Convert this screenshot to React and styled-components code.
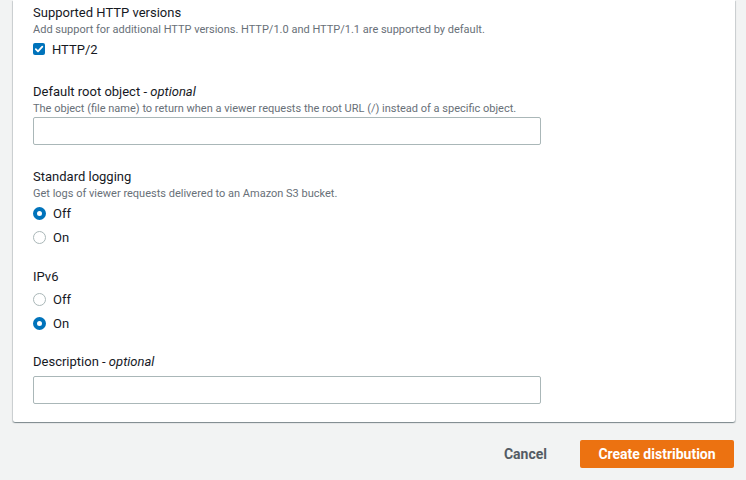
import React from 'react'
import styled, { createGlobalStyle } from 'styled-components'

const GlobalStyle = createGlobalStyle`
    body {
        margin: 0;
        background-color: #f2f3f3;
        font-family: Roboto, "Liberation Sans", Arial, sans-serif;
        color: #16191f;
    }
`;

const Page = styled.div`
    width: 746px;
    height: 480px;
    overflow: hidden;
`;

const Card = styled.div`
    margin: 0 11px 0 13px;
    background-color: #ffffff;
    border-radius: 0 0 2px 2px;
    box-shadow: 0 1px 1px 0 rgba(0, 28, 36, 0.3), 1px 1px 1px 0 rgba(0, 28, 36, 0.15), -1px 1px 1px 0 rgba(0, 28, 36, 0.15);
    padding: 3px 20px 18px;
`;

const Field = styled.div`
    margin-top: ${props => props.$gap || 0}px;
    display: flex;
    flex-direction: column;
`;

const Label = styled.label`
    font-size: 13px;
    line-height: 20px;
`;

const Optional = styled.i`
    font-style: italic;
`;

const Hint = styled.div`
    font-size: 11px;
    line-height: 14px;
    color: #687078;
`;

const Option = styled.label`
    display: flex;
    align-items: center;
    gap: 7px;
    height: 24px;
    font-size: 13px;
`;

const Checkbox = styled.span`
    width: 12px;
    height: 12px;
    border-radius: 2px;
    background-color: #0073bb;
    display: flex;
    align-items: center;
    justify-content: center;
`;

const Radio = styled.span`
    box-sizing: border-box;
    width: 13px;
    height: 13px;
    border-radius: 50%;
    background-color: #ffffff;
    border: ${props => props.$checked ? '4px solid #0073bb' : '1px solid #aab7b8'};
`;

const Input = styled.input`
    box-sizing: border-box;
    width: 508px;
    height: 28px;
    margin-top: ${props => props.$top || 1}px;
    border: 1px solid #aab7b8;
    border-radius: 2px;
    background-color: #ffffff;
    font-family: inherit;
    font-size: 13px;
    padding: 4px 10px;
    outline: none;
`;

const Footer = styled.div`
    display: flex;
    justify-content: flex-end;
    align-items: center;
    padding: 18px 12px 0 0;
`;

const CancelButton = styled.button`
    background: none;
    border: none;
    padding: 4px 20px;
    margin-right: 13px;
    font-family: inherit;
    font-size: 14px;
    font-weight: 700;
    color: #545b64;
    cursor: pointer;
`;

const PrimaryButton = styled.button`
    width: 154px;
    height: 28px;
    border: none;
    border-radius: 2px;
    background-color: #ec7211;
    color: #ffffff;
    font-family: inherit;
    font-size: 14px;
    font-weight: 700;
    cursor: pointer;
`;

function RadioOption({ label, checked }) {
    return (
        <Option>
            <Radio $checked={checked} />
            {label}
        </Option>
    )
}

export default function App() {
    return (
        <Page>
            <GlobalStyle />
            <Card>
                <Field>
                    <Label>Supported HTTP versions</Label>
                    <Hint>Add support for additional HTTP versions. HTTP/1.0 and HTTP/1.1 are supported by default.</Hint>
                    <Option>
                        <Checkbox>
                            <svg width="10" height="10" viewBox="0 0 10 10">
                                <path d="M1.8 5.2 L4 7.3 L8.3 2.6" fill="none" stroke="#ffffff" strokeWidth="1.8" strokeLinecap="round" strokeLinejoin="round" />
                            </svg>
                        </Checkbox>
                        HTTP/2
                    </Option>
                </Field>
                <Field $gap={21}>
                    <Label>Default root object - <Optional>optional</Optional></Label>
                    <Hint>The object (file name) to return when a viewer requests the root URL (/) instead of a specific object.</Hint>
                    <Input />
                </Field>
                <Field $gap={22}>
                    <Label>Standard logging</Label>
                    <Hint>Get logs of viewer requests delivered to an Amazon S3 bucket.</Hint>
                    <RadioOption label="Off" checked />
                    <RadioOption label="On" />
                </Field>
                <Field $gap={18}>
                    <Label>IPv6</Label>
                    <RadioOption label="Off" />
                    <RadioOption label="On" checked />
                </Field>
                <Field $gap={17}>
                    <Label>Description - <Optional>optional</Optional></Label>
                    <Input $top={4} />
                </Field>
            </Card>
            <Footer>
                <CancelButton>Cancel</CancelButton>
                <PrimaryButton>Create distribution</PrimaryButton>
            </Footer>
        </Page>
    )
}
